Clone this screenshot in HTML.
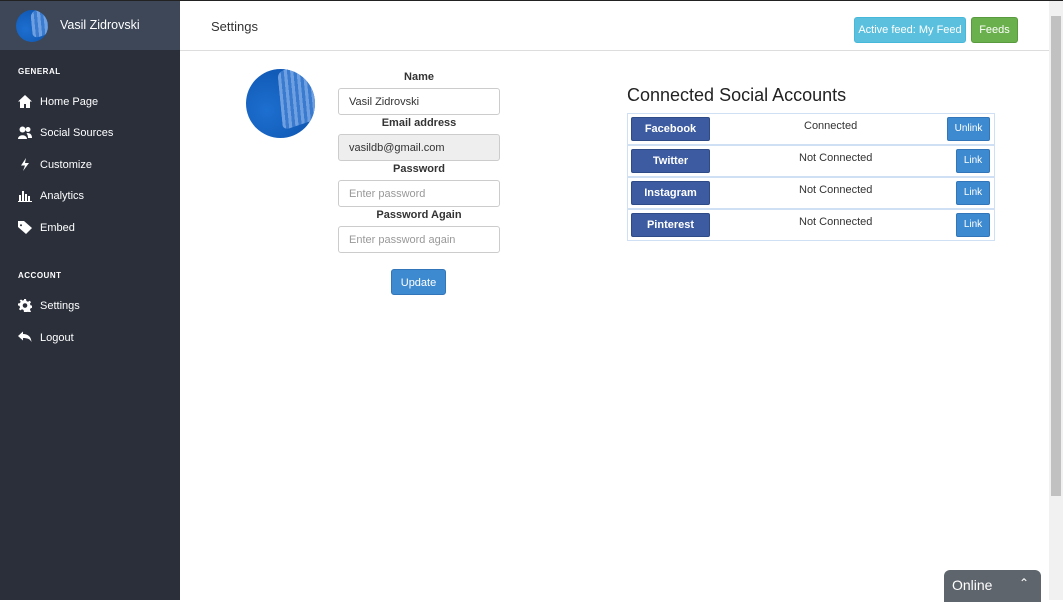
<!DOCTYPE html>
<html><head><style>
*{box-sizing:border-box;margin:0;padding:0}
body{width:1063px;height:600px;overflow:hidden;font-family:"Liberation Sans",sans-serif;background:#fff;position:relative;font-size:12px;color:#333}
#top{position:absolute;left:0;top:0;width:1063px;height:1px;background:#222;z-index:5}
#side{position:absolute;left:0;top:0;width:180px;height:600px;background:#2a2f3a;color:#fff}
#side .hd{height:50px;background:#3d4757;position:relative}
.av{border-radius:50%;background:radial-gradient(circle at 30% 60%,#1d6fd0,#0b4fa8);overflow:hidden;position:relative}
.av:after{content:"";position:absolute;left:50%;top:-10%;width:70%;height:90%;transform:skewX(-15deg) rotate(-20deg);background:repeating-linear-gradient(90deg,#6e9fe0 0 3px,#3a7bd0 3px 6px);border-radius:6px}
#side .name{position:absolute;left:60px;top:18px;font-size:12.5px}
.sec{font-size:8px;font-weight:bold;letter-spacing:.5px;position:absolute;left:18px}
.it{position:absolute;left:18px;font-size:11px;display:flex;align-items:center}
.it svg{width:14px;height:13px;margin-right:8px;fill:#fff}
#bar{position:absolute;left:180px;top:0;width:869px;height:51px;border-bottom:1px solid #ddd}
#bar .t{position:absolute;left:31px;top:19px;font-size:13px}
.btn{position:absolute;color:#fff;border-radius:3px;font-size:11px;text-align:center}
input{position:absolute;left:338px;width:162px;height:27px;border:1px solid #ccc;border-radius:3px;padding-left:10px;font-size:11px;font-family:"Liberation Sans",sans-serif;color:#333}
input::placeholder{color:#999}
.lb{position:absolute;left:338px;width:162px;text-align:center;font-weight:bold;font-size:11px}
#tbl{position:absolute;left:627px;top:113px;width:368px;height:128px;border:1px solid #cfe0f5}
.row{position:absolute;left:0;width:366px;height:32px;border-bottom:2px solid #cfe0f5}
.sb{position:absolute;left:3px;top:3px;width:79px;height:24px;background:#3c5ba0;border:1px solid #2e4a87;border-radius:2px;color:#fff;font-weight:bold;font-size:11px;text-align:center;line-height:22px}
.st{position:absolute;top:6px;font-size:11px}
.lk{position:absolute;right:4px;top:3px;height:24px;background:#3d8ad0;border:1px solid #3275b8;border-radius:2px;color:#fff;font-size:10px;text-align:center;line-height:22px}
</style></head><body>
<div id="top"></div>
<div id="side">
<div class="hd"><div class="av" style="position:absolute;left:16px;top:10px;width:32px;height:32px"></div><div class="name">Vasil Zidrovski</div></div>
<div class="sec" style="top:67px">GENERAL</div>
<div class="it" style="top:95px"><svg viewBox="0 0 14 13"><path d="M7 0L0 6.5h2V13h4V9h2v4h4V6.5h2z"/></svg>Home Page</div>
<div class="it" style="top:126px"><svg viewBox="0 0 14 13"><circle cx="4.5" cy="3.5" r="3"/><circle cx="10" cy="3.5" r="2.5"/><path d="M0 13c0-5 9-5 9 0zM9.5 7c3 0 4.5 2 4.5 5h-4c0-2-.5-3.5-1.5-4.5z"/></svg>Social Sources</div>
<div class="it" style="top:158px"><svg viewBox="0 0 14 13"><path d="M8 0L3 7.5h4L5 13l6-8H7z"/></svg>Customize</div>
<div class="it" style="top:189px"><svg viewBox="0 0 14 13"><path d="M1 6h2v6H1zM4 2h2v10H4zM7 5h2v7H7zM10 7h2v5h-2zM0 12h14v1H0z"/></svg>Analytics</div>
<div class="it" style="top:221px"><svg viewBox="0 0 14 13"><path d="M0 0h6l8 7-6 6-8-7zM3 3.2a1 1 0 1 0 .01 0z"/></svg>Embed</div>
<div class="sec" style="top:271px">ACCOUNT</div>
<div class="it" style="top:299px"><svg viewBox="0 0 14 13"><path d="M6 0h2l.4 2 1.6.8 1.7-1.1 1.3 1.4-1.1 1.7.7 1.6 2 .4v2l-2 .4-.7 1.6 1.1 1.7-1.3 1.3-1.7-1.1-1.6.7L8 13H6l-.4-2-1.6-.7-1.7 1.1L1 10.1l1.1-1.7-.7-1.6L0 6.5v-2l2-.4.7-1.6L1.6 1.8 3 .5l1.7 1.1L6 1zM7 4.2a2.3 2.3 0 1 0 .01 0z"/></svg>Settings</div>
<div class="it" style="top:331px"><svg viewBox="0 0 14 13"><path d="M0 5l5-4.5V3c5 0 8 2.5 8.5 8-1.5-3-4-4-8.5-4v2.5z"/></svg>Logout</div>
</div>
<div id="bar"><div class="t">Settings</div></div>
<div class="btn" style="left:854px;top:17px;width:112px;height:26px;line-height:24px;background:#5bc0de;border:1px solid #46b8da">Active feed: My Feed</div>
<div class="btn" style="left:971px;top:17px;width:47px;height:26px;line-height:24px;background:#6ab04c;border:1px solid #5a9a3e">Feeds</div>
<div style="position:absolute;left:1049px;top:1px;width:14px;height:599px;background:#f1f1f1"><div style="position:absolute;left:2px;top:15px;width:10px;height:480px;background:#c1c1c1"></div></div>
<div class="av" style="position:absolute;left:246px;top:69px;width:69px;height:69px"></div>
<div class="lb" style="top:71px">Name</div>
<input style="top:88px" value="Vasil Zidrovski">
<div class="lb" style="top:117px">Email address</div>
<input style="top:134px;background:#eee" value="vasildb@gmail.com">
<div class="lb" style="top:163px">Password</div>
<input style="top:180px" placeholder="Enter password">
<div class="lb" style="top:209px">Password Again</div>
<input style="top:226px" placeholder="Enter password again">
<div class="btn" style="left:391px;top:269px;width:55px;height:26px;line-height:26px;background:#3d8ad0;border:1px solid #3275b8">Update</div>
<div style="position:absolute;left:627px;top:85px;font-size:18px;color:#222">Connected Social Accounts</div>
<div id="tbl">
<div class="row" style="top:0"><div class="sb">Facebook</div><div class="st" style="left:176px">Connected</div><div class="lk" style="width:43px">Unlink</div></div>
<div class="row" style="top:32px"><div class="sb">Twitter</div><div class="st" style="left:171px">Not Connected</div><div class="lk" style="width:34px">Link</div></div>
<div class="row" style="top:64px"><div class="sb">Instagram</div><div class="st" style="left:171px">Not Connected</div><div class="lk" style="width:34px">Link</div></div>
<div class="row" style="top:96px;border-bottom:none"><div class="sb">Pinterest</div><div class="st" style="left:171px">Not Connected</div><div class="lk" style="width:34px">Link</div></div>
</div>
<div style="position:absolute;left:944px;top:570px;width:97px;height:32px;background:#5f656d;border-radius:6px 6px 0 0;color:#fff;font-size:14px;padding:7px 0 0 8px">Online<span style="position:absolute;right:12px;top:6px;font-size:12px">⌃</span></div>
</body></html>
